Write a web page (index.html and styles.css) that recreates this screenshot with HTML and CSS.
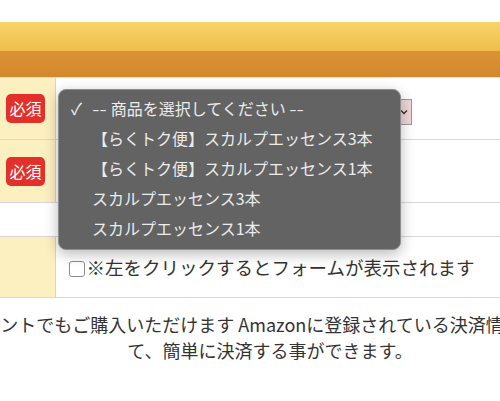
FILE: index.html
```html
<!DOCTYPE html>
<html lang="ja">
<head>
  <meta charset="UTF-8">
  <title>ご注文フォーム</title>
  <link rel="stylesheet" href="styles.css">
</head>
<body>
  <div id="page">
    <div class="cartHead"></div>

    <table class="orderForm">
      <tr>
        <th><span class="req">必須</span></th>
        <td>
          <div class="selectBox">
            <svg class="chevron" width="8" height="6" viewBox="0 0 8 6"><path d="M1 1.5 L4 4.5 L7 1.5" fill="none" stroke="#333" stroke-width="1.3"/></svg>
          </div>
        </td>
      </tr>
      <tr>
        <th><span class="req">必須</span></th>
        <td></td>
      </tr>
      <tr class="blank">
        <td colspan="2"></td>
      </tr>
      <tr>
        <th></th>
        <td class="checkCell">
          <span class="checkBox"></span><span class="checkText">※左をクリックするとフォームが表示されます</span>
        </td>
      </tr>
    </table>

    <!-- open native select menu -->
    <ul class="dropMenu">
      <li class="selected"><span class="tick">✓</span><span class="dash">--</span> 商品を選択してください <span class="dash">--</span></li>
      <li>【らくトク便】スカルプエッセンス3本</li>
      <li>【らくトク便】スカルプエッセンス1本</li>
      <li>スカルプエッセンス3本</li>
      <li>スカルプエッセンス1本</li>
    </ul>

    <p class="note">アカウントでもご購入いただけます Amazonに登録されている決済情報を利用し<br>て、簡単に決済する事ができます。</p>
  </div>
</body>
</html>
```

FILE: styles.css
```css
html, body {
  margin: 0;
  overflow: hidden;
  background: #fff;
}

body {
  font-family: "Noto Sans CJK JP", "Noto Sans", sans-serif;
  color: #333;
}

#page {
  position: relative;
  padding-top: 22px;
}

.cartHead {
  height: 55px;
  background: linear-gradient(#f7d56a 0, #efbd4b 52%, #db9334 52%, #d3882d 100%);
  border-bottom: 1px solid #e2e2e2;
}

.orderForm {
  width: 100%;
  border-collapse: collapse;
}

.orderForm th,
.orderForm td {
  padding: 0;
  border-bottom: 1px solid #d8d8d8;
}

.orderForm th {
  width: 55px;
  background: #fcf0c1;
  border-right: 1px solid #d4d4d4;
  text-align: left;
  font-weight: normal;
  padding-left: 6px;
  box-sizing: border-box;
}

.orderForm tr:nth-child(1) th,
.orderForm tr:nth-child(1) td {
  height: 61px;
}

.orderForm tr:nth-child(2) th,
.orderForm tr:nth-child(2) td {
  height: 62px;
}

.orderForm tr.blank td {
  height: 33px;
}

.orderForm tr:nth-child(4) th,
.orderForm tr:nth-child(4) td {
  height: 60px;
}

.req {
  display: inline-block;
  width: 39px;
  height: 29px;
  line-height: 29px;
  text-align: center;
  background: #e4302a;
  color: #fff;
  font-size: 16px;
  border-radius: 5px;
}

.selectBox {
  position: relative;
  margin: 6px 0 0 10px;
  width: 344px;
  height: 24px;
  background: #f0d6d6;
  border: 1px solid #9a9a9a;
}

.chevron {
  position: absolute;
  right: 3px;
  top: 9px;
}

.checkCell {
  padding-left: 13px !important;
  font-size: 18.5px;
}

.checkBox {
  display: inline-block;
  width: 14px;
  height: 14px;
  border: 1px solid #8c8c8c;
  border-radius: 3px;
  background: #fff;
  vertical-align: -2px;
  margin-right: 2px;
}

.checkText {
  color: #333;
}

.dropMenu {
  position: absolute;
  left: 58px;
  top: 89px;
  width: 343px;
  height: 161px;
  margin: 0;
  padding: 3px 0 0;
  list-style: none;
  background: #636363;
  border: 1px solid #8e8e8e;
  border-radius: 8px;
  box-shadow: 0 4px 14px rgba(0, 0, 0, 0.28);
  box-sizing: border-box;
}

.dropMenu li {
  position: relative;
  height: 30px;
  line-height: 30px;
  padding-left: 33px;
  font-size: 16px;
  color: #ececec;
  white-space: nowrap;
}

.dropMenu .dash {
  display: inline-block;
  transform: scaleX(1.3);
  margin: 0 2px;
}

.dropMenu .tick {
  position: absolute;
  left: 12px;
  top: 0;
  font-size: 16px;
  color: #f2f2f2;
}

.note {
  width: 700px;
  margin: 13px 0 0 -80px;
  text-align: center;
  font-size: 18px;
  line-height: 26px;
  color: #333;
  white-space: nowrap;
}
```
